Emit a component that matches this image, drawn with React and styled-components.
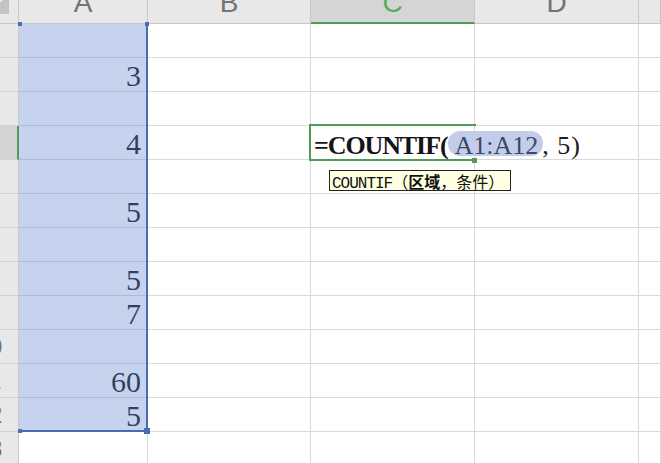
import React from 'react';
import styled, { createGlobalStyle } from 'styled-components';

const Global = createGlobalStyle`
  html, body { margin: 0; padding: 0; background: #fff; }
  body { width: 661px; height: 463px; overflow: hidden; font-family: "Liberation Sans", Arial, sans-serif; }
`;

const GREEN = '#4f9d55';
const BLUE = '#4a6db0';

const Sheet = styled.div`
  display: grid;
  grid-template-columns: 19px 129px 163px 164px 164px 1fr;
  grid-template-rows: 24px repeat(13, 34px);
  width: 661px;
  height: 463px;
  overflow: hidden;
  background: #fff;
`;

const Corner = styled.div`
  grid-area: 1 / 1;
  box-sizing: border-box;
  background: #e8e8e8;
  border-right: 1px solid #c8c8c8;
  border-bottom: 1px solid #c8c8c8;
  overflow: hidden;
  line-height: 0;
`;

const ColHead = styled.div`
  grid-area: 1 / ${(p) => p.$c};
  box-sizing: border-box;
  display: flex;
  justify-content: center;
  align-items: flex-end;
  padding-bottom: ${(p) => (p.$active ? 5 : 6)}px;
  overflow: hidden;
  background: ${(p) => (p.$active ? '#d5d5d5' : '#e8e8e8')};
  border-right: 1px solid #c8c8c8;
  border-bottom: ${(p) => (p.$active ? `2px solid ${GREEN}` : '1px solid #c8c8c8')};
  font: 28px/1 "Liberation Sans", Arial, sans-serif;
  color: ${(p) => (p.$active ? '#5aab5e' : '#737373')};
`;

const RowHead = styled.div`
  grid-area: ${(p) => p.$r} / 1;
  box-sizing: border-box;
  display: flex;
  justify-content: flex-end;
  align-items: center;
  overflow: hidden;
  background: ${(p) => (p.$active ? '#d4d4d4' : '#e8e8e8')};
  border-right: ${(p) => (p.$active ? `2px solid ${GREEN}` : '1px solid #c8c8c8')};
  border-bottom: 1px solid #d0d0d0;
  font: 24px/1 "Liberation Sans", Arial, sans-serif;
  color: #737373;
`;

const RowLabel = styled.span`
  flex: 0 0 58px;
  text-align: center;
`;

const Cell = styled.div`
  grid-area: ${(p) => p.$r} / ${(p) => p.$c};
  box-sizing: border-box;
  display: flex;
  justify-content: flex-end;
  align-items: flex-end;
  padding-right: 6px;
  border-right: 1px solid #d9d9d9;
  border-bottom: 1px solid #d9d9d9;
  font: 30px/1 "Liberation Serif", "Times New Roman", serif;
  color: #1c1c1c;
`;

const Selection = styled.div`
  grid-area: 2 / 2 / 14 / 3;
  position: relative;
  box-sizing: border-box;
  background: rgba(92, 129, 209, 0.35);
  border-right: 2px solid ${BLUE};
  border-bottom: 2px solid ${BLUE};
  pointer-events: none;
  z-index: 1;
`;

const SelHandle = styled.span`
  position: absolute;
  width: ${(p) => p.$size}px;
  height: ${(p) => p.$size}px;
  background: ${BLUE};
  ${(p) => p.$pos}
`;

const Editor = styled.div`
  grid-area: 5 / 4;
  position: relative;
  margin: -2px -1px -1px -2px;
  border: 2px solid ${GREEN};
  border-right: none;
  display: flex;
  align-items: flex-start;
  padding: 5px 0 0 3px;
  white-space: nowrap;
  z-index: 3;
`;

const EditHandle = styled.span`
  position: absolute;
  right: -1px;
  bottom: -4px;
  width: 5px;
  height: 5px;
  background: ${GREEN};
`;

const Token = styled.span`
  display: inline-block;
  height: 25px;
  line-height: 30px;
  font-family: "Liberation Serif", "Times New Roman", serif;
  font-size: 26px;
  font-weight: ${(p) => (p.$bold ? 700 : 400)};
  letter-spacing: ${(p) => p.$spacing || 0}px;
  color: ${(p) => p.$color || '#151515'};
  margin-left: ${(p) => p.$shift || 0}px;
`;

const Caret = styled.span`
  display: inline-block;
  width: 1px;
  height: 25px;
  margin-left: 1px;
  background: #000;
`;

const RefPill = styled(Token)`
  background: #c3cdea;
  border-radius: 12px;
  padding: 0 5px 0 6px;
`;

const Tip = styled.div`
  position: absolute;
  left: 18px;
  top: 44px;
  box-sizing: border-box;
  height: 21px;
  padding: 1px 6px 0 2px;
  background: #ffffe1;
  border: 1px solid #222;
  font: 16px/18px "Liberation Mono", "Courier New", monospace;
  letter-spacing: -1px;
  color: #111;
  white-space: nowrap;
  z-index: 4;
`;

const TipCjk = styled.span`
  font-family: "Noto Sans CJK SC", "Noto Sans CJK JP", sans-serif;
  font-size: 16px;
  letter-spacing: 0;
  font-weight: ${(p) => (p.$bold ? 700 : 400)};
`;

const COLS = ['A', 'B', 'C', 'D', 'E'];
const VALUES = { 2: '3', 4: '4', 6: '5', 8: '5', 9: '7', 11: '60', 12: '5' };
const ROWS = Array.from({ length: 13 }, (_, i) => i + 1);

export default function App() {
  return (
    <>
      <Global />
      <Sheet>
        <Corner>
          <svg width="9" height="14" viewBox="0 0 9 14">
            <polygon points="0,3 3,0 9,0 9,14 0,14" fill="#c4c4c4" />
          </svg>
        </Corner>
        {COLS.map((c, i) => (
          <ColHead key={c} $c={i + 2} $active={c === 'C'}>
            {c === 'E' ? '' : c}
          </ColHead>
        ))}
        {ROWS.map((r) => (
          <React.Fragment key={r}>
            <RowHead $r={r + 1} $active={r === 4}>
              <RowLabel>{r}</RowLabel>
            </RowHead>
            {COLS.map((c, i) => (
              <Cell key={c} $r={r + 1} $c={i + 2}>
                {c === 'A' ? VALUES[r] || '' : ''}
              </Cell>
            ))}
          </React.Fragment>
        ))}
        <Selection>
          <SelHandle $size={4} $pos="top: -2px; left: -1px;" />
          <SelHandle $size={4} $pos="top: -2px; right: -3px;" />
          <SelHandle $size={4} $pos="bottom: -3px; left: -1px;" />
          <SelHandle $size={6} $pos="bottom: -4px; right: -4px;" />
        </Selection>
        <Editor>
          <Token $bold $spacing={-1.1}>=COUNTIF(</Token>
          <Caret />
          <RefPill $color="#3a4868">A1:A12</RefPill>
          <Token $shift={-1} $spacing={1} $color="#1c1c1c">, 5)</Token>
          <EditHandle />
          <Tip>
            COUNTIF<TipCjk>（</TipCjk>
            <TipCjk $bold>区域</TipCjk>
            <TipCjk>，条件）</TipCjk>
          </Tip>
        </Editor>
      </Sheet>
    </>
  );
}
